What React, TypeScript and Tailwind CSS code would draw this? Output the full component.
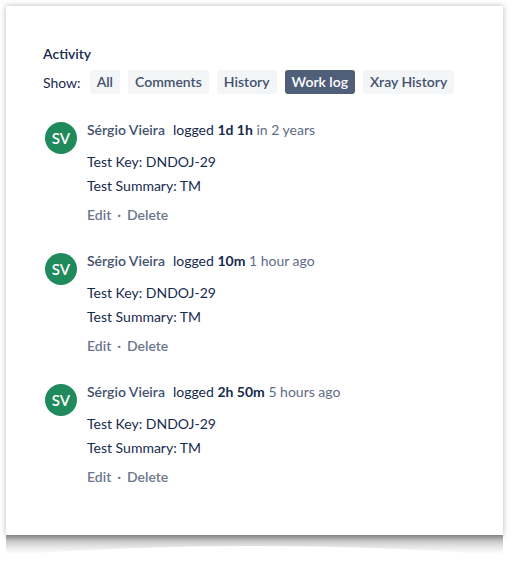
import React from "react";

const entries = [
  { dur: "1d 1h", when: "in 2 years" },
  { dur: "10m", when: "1 hour ago" },
  { dur: "2h 50m", when: "5 hours ago" },
];

const tabs = ["All", "Comments", "History", "Work log", "Xray History"];

export default function App() {
  return (
    <div
      className="w-[517px] h-[564px] bg-white overflow-hidden pt-[6px] pl-[6px]"
      style={{ fontFamily: 'Lato, "Liberation Sans", Arial, sans-serif' }}
    >
      <div className="w-[497px] h-[529px] bg-white shadow-[0_0_6px_rgba(0,0,0,0.28)] pt-[38px] pl-[37px]">
        <div className="text-[14px] leading-[20px] font-semibold text-[#172b4d]">Activity</div>
        <div className="mt-[6px] flex items-center h-[24px] text-[14px]">
          <span className="text-[#172b4d] mr-[9px]">Show:</span>
          <div className="flex gap-[8px]">
            {tabs.map((t) => (
              <span
                key={t}
                className={
                  "h-[24px] leading-[24px] px-[7px] rounded-[3px] font-semibold " +
                  (t === "Work log" ? "bg-[#505f79] text-white" : "bg-[#f4f5f7] text-[#42526e]")
                }
              >
                {t}
              </span>
            ))}
          </div>
        </div>
        <div className="mt-[26px] flex flex-col gap-[26px] pl-[2px]">
          {entries.map((e, i) => (
            <div key={i} className="flex">
              <div className="mt-[2px] w-[32px] h-[32px] rounded-full bg-[#1f8a5b] text-white flex items-center justify-center text-[15px] font-semibold shrink-0">
                SV
              </div>
              <div className="ml-[10px] flex flex-col text-[14px] leading-[20px]">
                <div>
                  <span className="font-semibold text-[#42526e]">Sérgio Vieira</span>
                  <span className="ml-[8px] text-[#172b4d]">logged </span>
                  <span className="font-bold text-[#172b4d]">{e.dur}</span>
                  <span className="text-[#5e6c84]"> {e.when}</span>
                </div>
                <div className="mt-[12px] text-[#172b4d]">Test Key: DNDOJ-29</div>
                <div className="mt-[4px] text-[#172b4d]">Test Summary: TM</div>
                <div className="mt-[9px] text-[#6b778c] font-semibold flex items-center">
                  <span>Edit</span>
                  <span className="mx-[6px]">·</span>
                  <span>Delete</span>
                </div>
              </div>
            </div>
          ))}
        </div>
      </div>
      <svg width="497" height="22" className="block" viewBox="0 0 497 22">
        <defs>
          <linearGradient id="sh" x1="0" y1="0" x2="0" y2="1">
            <stop offset="0" stopColor="#777777" stopOpacity="0.9" />
            <stop offset="0.35" stopColor="#9a9a9a" stopOpacity="0.5" />
            <stop offset="1" stopColor="#d0d0d0" stopOpacity="0" />
          </linearGradient>
        </defs>
        <path d="M0 0 H497 V20 Q248 2 0 20 Z" fill="url(#sh)" />
      </svg>
    </div>
  );
}
